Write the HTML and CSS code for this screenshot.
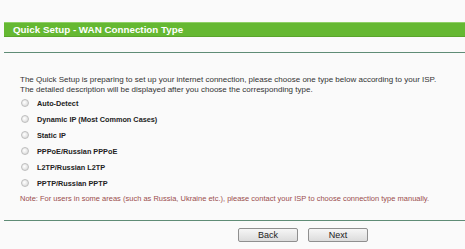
FILE: index.html
```html
<!DOCTYPE html>
<html>
<head>
<meta charset="utf-8">
<link rel="stylesheet" href="styles.css">
</head>
<body>
<div class="page">
  <div class="title-bar">Quick Setup - WAN Connection Type</div>
  <div class="rule top-rule"></div>
  <div class="content">
    <p class="intro">The Quick Setup is preparing to set up your internet connection, please choose one type below according to your ISP.<br>The detailed description will be displayed after you choose the corresponding type.</p>
    <div class="options">
      <label class="option"><input type="radio" name="wan"><span>Auto-Detect</span></label>
      <label class="option"><input type="radio" name="wan"><span>Dynamic IP (Most Common Cases)</span></label>
      <label class="option"><input type="radio" name="wan"><span>Static IP</span></label>
      <label class="option"><input type="radio" name="wan"><span>PPPoE/Russian PPPoE</span></label>
      <label class="option"><input type="radio" name="wan"><span>L2TP/Russian L2TP</span></label>
      <label class="option"><input type="radio" name="wan"><span>PPTP/Russian PPTP</span></label>
    </div>
    <p class="note">Note: For users in some areas (such as Russia, Ukraine etc.), please contact your ISP to choose connection type manually.</p>
  </div>
  <div class="rule bottom-rule"></div>
  <div class="buttons">
    <button class="btn">Back</button>
    <button class="btn">Next</button>
  </div>
</div>
</body>
</html>
```

FILE: styles.css
```css
html, body {
  margin: 0;
  padding: 0;
  background: #fafafa;
}
body {
  font-family: "Liberation Sans", Arial, sans-serif;
  color: #333;
}
.page {
  padding: 22px 0 0 4px;
}
.title-bar {
  height: 15px;
  box-sizing: border-box;
  background: #65b832;
  border-top: 1px solid #8fd066;
  border-bottom: 1px solid #5aa52c;
  color: #fff;
  font-weight: bold;
  font-size: 9.8px;
  line-height: 13px;
  padding-left: 9px;
}
.rule {
  height: 0;
  border-top: 1px solid #5f8c76;
}
.top-rule {
  margin-top: 15px;
}
.content {
  padding-left: 16px;
  padding-top: 22px;
}
.intro {
  margin: 0;
  font-size: 8px;
  line-height: 10px;
  color: #333;
}
.options {
  display: flex;
  flex-direction: column;
}
.option {
  display: flex;
  align-items: center;
  height: 16px;
  font-size: 7.3px;
  font-weight: bold;
  color: #222;
}
.option input {
  appearance: none;
  -webkit-appearance: none;
  width: 8px;
  height: 8px;
  margin: 0 8px 0 1px;
  border: 1px solid #bdbdbd;
  border-radius: 50%;
  background: radial-gradient(circle at 40% 40%, #ffffff 0, #dedede 75%);
  box-sizing: border-box;
}
.note {
  margin: 0;
  height: 16px;
  font-size: 7.5px;
  line-height: 16px;
  color: #9b4d4d;
}
.bottom-rule {
  margin-top: 13px;
}
.buttons {
  display: flex;
  gap: 10px;
  padding: 7px 0 0 234px;
}
.btn {
  width: 60px;
  height: 14px;
  padding: 0;
  border: 1px solid #8f8f8f;
  border-radius: 2px;
  background: linear-gradient(#f6f6f6, #dcdcdc);
  font-family: "Liberation Sans", Arial, sans-serif;
  font-size: 9px;
  line-height: 12px;
  color: #222;
}
```
